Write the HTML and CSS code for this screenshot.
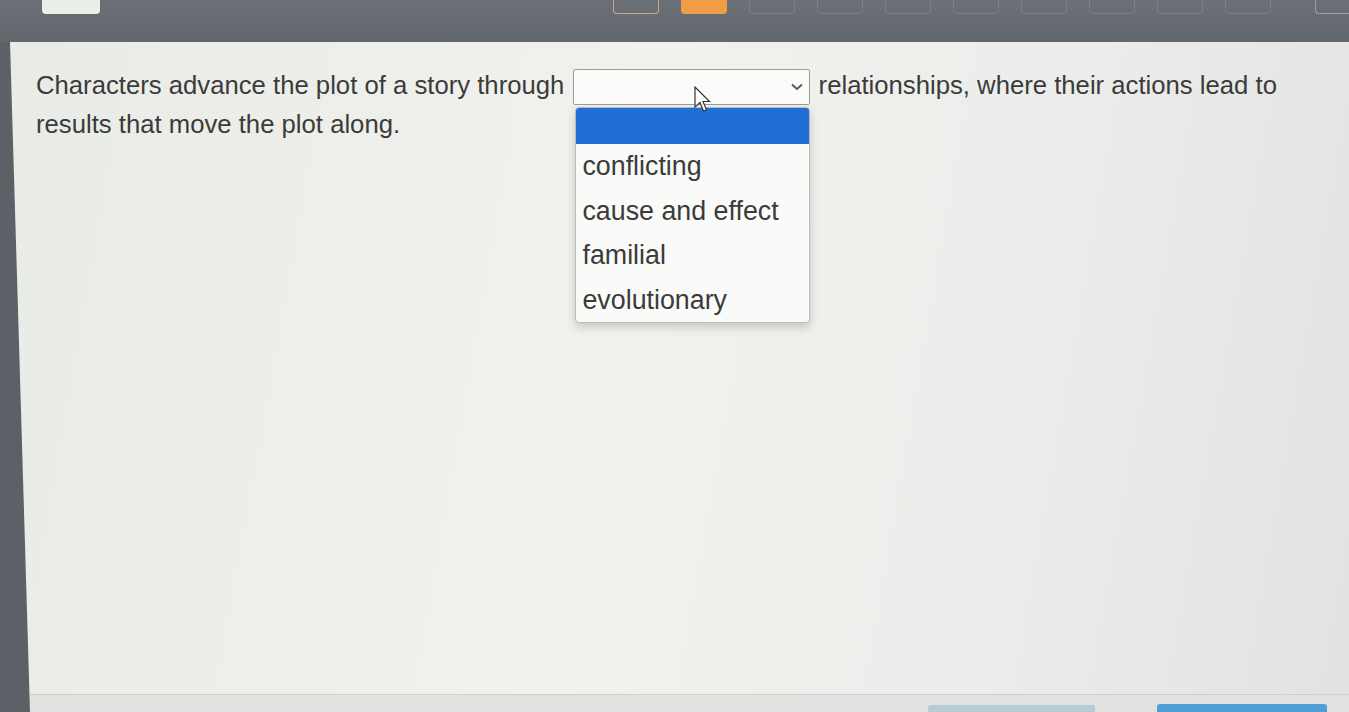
FILE: index.html
```html
<!DOCTYPE html>
<html lang="en">
<head>
  <meta charset="UTF-8">
  <meta name="viewport" content="width=device-width, initial-scale=1.0">
  <title>Question</title>
  <link rel="stylesheet" href="styles.css">
</head>
<body>
  <div class="topbar">
    <div class="tab"></div>
    <div class="steps">
      <span class="step done"></span>
      <span class="step current"></span>
      <span class="step"></span>
      <span class="step"></span>
      <span class="step"></span>
      <span class="step"></span>
      <span class="step"></span>
      <span class="step"></span>
      <span class="step"></span>
      <span class="step"></span>
    </div>
    <span class="step last"></span>
  </div>

  <div class="page">
    <div class="panel">
      <div class="question">
        Characters advance the plot of a story through
        <span class="dropdown">
          <span class="select">
            <svg class="chevron" width="12" height="8" viewBox="0 0 12 8"><path d="M1 1.5 L6 6 L11 1.5" fill="none" stroke="#555" stroke-width="1.8"/></svg>
          </span>
          <span class="options">
            <span class="option selected"></span>
            <span class="option">conflicting</span>
            <span class="option">cause and effect</span>
            <span class="option">familial</span>
            <span class="option">evolutionary</span>
          </span>
          <svg class="pointer" width="18" height="28" viewBox="0 0 18 28"><path d="M1 1 L1 21 L6 16.5 L9.5 25 L12.5 23.8 L9 15.5 L15.5 15.5 Z" fill="#fff" stroke="#333" stroke-width="1.2"/></svg>
        </span>
        relationships, where their actions lead to results that move the plot along.
      </div>
    </div>

    <div class="footer">
      <span class="btn ghost"></span>
      <span class="btn primary"></span>
    </div>
  </div>
</body>
</html>
```

FILE: styles.css
```css
body {
  margin: 0;
  height: 712px;
  overflow: hidden;
  background: #5b6166;
  font-family: "Liberation Sans", Arial, sans-serif;
}

/* top strip with progress squares */
.topbar {
  height: 42px;
  display: flex;
  align-items: flex-start;
  padding-left: 42px;
  background: linear-gradient(180deg, #6a7075, #60666b);
  box-sizing: border-box;
}
.tab {
  width: 58px;
  height: 14px;
  background: #ecefe9;
  border-radius: 0 0 4px 4px;
}
.steps {
  display: flex;
  gap: 22px;
  margin-left: 513px;
}
.step {
  width: 46px;
  height: 14px;
  border: 1px solid #7a8086;
  border-top: none;
  border-radius: 0 0 4px 4px;
  box-sizing: border-box;
}
.step.done {
  border-color: #c9a88a;
}
.step.current {
  background: #f29d45;
  border-color: #f29d45;
}
.step.last {
  margin-left: auto;
  width: 34px;
  border-color: #9aa0a4;
  border-radius: 0 0 0 4px;
  border-right: none;
}

.page {
  margin-left: 10px;
  clip-path: polygon(0 0, 100% 0, 100% 100%, 20px 100%);
}

/* question area */
.panel {
  height: 652px;
  background: linear-gradient(100deg, #e9ebe6 0%, #f1f2ee 45%, #ecedea 75%, #e2e3e1 100%);
  box-sizing: border-box;
  padding: 24px 50px 0 26px;
}
.question {
  font-size: 25.7px;
  line-height: 38px;
  color: #3b3b3b;
}

.dropdown {
  position: relative;
  display: inline-block;
  vertical-align: middle;
  margin: 0 1px 0 2px;
}
.select {
  display: flex;
  align-items: center;
  justify-content: flex-end;
  width: 237px;
  height: 36px;
  padding-right: 6px;
  box-sizing: border-box;
  background: #fbfbfa;
  border: 1px solid #9a9c9c;
  border-radius: 2px;
}
.options {
  position: absolute;
  top: 38px;
  left: 2px;
  width: 233px;
  background: #fafaf8;
  border: 1px solid #b9bbbb;
  border-radius: 4px;
  box-shadow: 0 4px 10px rgba(0, 0, 0, 0.18);
  overflow: hidden;
  z-index: 2;
}
.option {
  display: block;
  height: 44.5px;
  line-height: 44px;
  padding-left: 6px;
  font-size: 26.8px;
  color: #3b3b3b;
}
.option.selected {
  height: 36px;
  background: #1f6fd4;
}
.pointer {
  position: absolute;
  left: 121px;
  top: 17px;
  z-index: 3;
}

/* bottom strip with navigation buttons */
.footer {
  height: 18px;
  display: flex;
  align-items: flex-end;
  justify-content: flex-end;
  gap: 62px;
  padding-right: 22px;
  background: #e2e3e0;
  border-top: 1px solid #cfd0cd;
  box-sizing: border-box;
}
.btn {
  height: 7px;
  border-radius: 3px 3px 0 0;
}
.btn.ghost {
  width: 167px;
  background: #b4ccd4;
}
.btn.primary {
  width: 170px;
  height: 8px;
  background: #4f9fd6;
}
```
